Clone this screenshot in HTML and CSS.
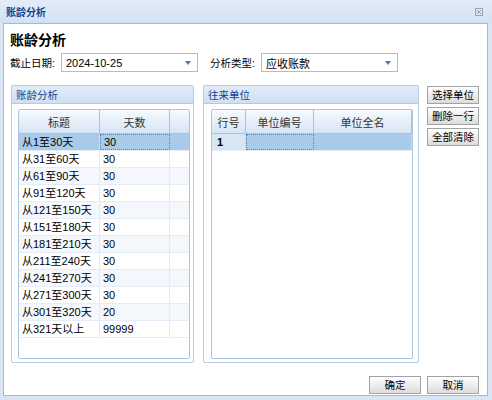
FILE: index.html
```html
<!DOCTYPE html>
<html lang="zh">
<head>
<meta charset="utf-8">
<title>账龄分析</title>
<link rel="stylesheet" href="styles.css">
</head>
<body>
<div class="window">
  <div class="titlebar">
    <span class="title">账龄分析</span>
    <svg class="close" width="8" height="8" viewBox="0 0 8 8"><rect x="0.5" y="0.5" width="7" height="7" fill="none" stroke="#9aa4ae"/><path d="M2 2L6 6M6 2L2 6" stroke="#9aa4ae"/></svg>
  </div>
  <div class="body">
    <h1 class="heading">账龄分析</h1>
    <div class="form-row">
      <label class="lbl">截止日期:</label>
      <div class="combo"><span>2024-10-25</span><i class="arrow"></i></div>
      <label class="lbl lbl2">分析类型:</label>
      <div class="combo"><span>应收账款</span><i class="arrow"></i></div>
    </div>
    <div class="main">
      <div class="panel panel-left">
        <div class="panel-head">账龄分析</div>
        <div class="grid grid-left">
          <div class="ghead">
            <div class="c c1">标题</div><div class="c c2">天数</div><div class="c c3"></div>
          </div>
          <div class="gbody">
            <div class="row sel"><div class="c c1">从1至30天</div><div class="c c2 focus">30</div><div class="c c3"></div></div>
            <div class="row"><div class="c c1">从31至60天</div><div class="c c2">30</div><div class="c c3"></div></div>
            <div class="row alt"><div class="c c1">从61至90天</div><div class="c c2">30</div><div class="c c3"></div></div>
            <div class="row"><div class="c c1">从91至120天</div><div class="c c2">30</div><div class="c c3"></div></div>
            <div class="row alt"><div class="c c1">从121至150天</div><div class="c c2">30</div><div class="c c3"></div></div>
            <div class="row"><div class="c c1">从151至180天</div><div class="c c2">30</div><div class="c c3"></div></div>
            <div class="row alt"><div class="c c1">从181至210天</div><div class="c c2">30</div><div class="c c3"></div></div>
            <div class="row"><div class="c c1">从211至240天</div><div class="c c2">30</div><div class="c c3"></div></div>
            <div class="row alt"><div class="c c1">从241至270天</div><div class="c c2">30</div><div class="c c3"></div></div>
            <div class="row"><div class="c c1">从271至300天</div><div class="c c2">30</div><div class="c c3"></div></div>
            <div class="row alt"><div class="c c1">从301至320天</div><div class="c c2">20</div><div class="c c3"></div></div>
            <div class="row"><div class="c c1">从321天以上</div><div class="c c2">99999</div><div class="c c3"></div></div>
          </div>
        </div>
      </div>
      <div class="panel panel-right">
        <div class="panel-head">往来单位</div>
        <div class="grid grid-right">
          <div class="ghead">
            <div class="c r1">行号</div><div class="c r2">单位编号</div><div class="c r3">单位全名</div>
          </div>
          <div class="gbody">
            <div class="row sel"><div class="c r1 rownum">1</div><div class="c r2 focus"></div><div class="c r3"></div></div>
          </div>
        </div>
      </div>
      <div class="side-buttons">
        <button class="btn">选择单位</button>
        <button class="btn">删除一行</button>
        <button class="btn">全部清除</button>
      </div>
    </div>
    <div class="footer">
      <button class="btn">确定</button>
      <button class="btn">取消</button>
    </div>
  </div>
</div>
</body>
</html>
```
FILE: styles.css
```css
* { box-sizing: border-box; }
html, body { margin: 0; padding: 0; }
body {
  font-family: "Liberation Sans", "Noto Sans CJK SC", sans-serif;
  font-size: 11px;
  color: #000;
  background: #dbe6f4;
}
.window {
  width: 492px;
  height: 400px;
  display: flex;
  flex-direction: column;
  background: #d9e5f4;
}
.titlebar {
  height: 23px;
  flex: none;
  display: flex;
  align-items: center;
  justify-content: space-between;
  padding: 0 9px 0 6px;
  background: linear-gradient(#e3edf9, #d1e1f4);
}
.title {
  color: #15428b;
  font-weight: bold;
  font-size: 10px;
}
.close { margin-top: 1px; }
.body {
  flex: 1;
  margin: 0 4px 4px 3px;
  border: 1px solid #99bbe8;
  background: #fff;
  padding: 0 8px 0 6px;
  display: flex;
  flex-direction: column;
}
.heading {
  margin: 4px 0 0 0;
  font-size: 14px;
  line-height: 24px;
  font-weight: bold;
  color: #000;
}
.form-row {
  display: flex;
  align-items: center;
  margin-top: 1px;
  height: 19px;
}
.lbl {
  width: 51px;
  flex: none;
  white-space: nowrap;
  font-size: 10.5px;
  color: #000;
}
.lbl2 { margin-left: 12px; }
.combo {
  width: 137px;
  flex: none;
  height: 19px;
  border: 1px solid #a5bfdc;
  display: flex;
  align-items: center;
  justify-content: space-between;
  padding: 0 4px 0 4px;
  background: #fff;
}
.arrow {
  width: 0; height: 0;
  border-left: 3px solid transparent;
  border-right: 3px solid transparent;
  border-top: 4px solid #4c7ab3;
  margin-right: 2px;
}
.main {
  display: flex;
  margin-top: 13px;
  height: 278px;
}
.panel {
  border: 1px solid #b5cbe4;
  border-radius: 2px;
  display: flex;
  flex-direction: column;
  background: #fff;
}
.panel-left { width: 183px; margin-left: 1px; }
.panel-right { width: 216px; margin-left: 9px; }
.panel-head {
  height: 18px;
  flex: none;
  line-height: 18px;
  padding-left: 4px;
  font-size: 10.5px;
  color: #15428b;
  background: linear-gradient(#e2ecf8, #cfe0f3);
  border-bottom: 1px solid #b5cbe4;
}
.grid {
  flex: 1;
  border: 1px solid #aac3e0;
  border-radius: 2px;
  display: flex;
  flex-direction: column;
  overflow: hidden;
}
.grid-left { margin: 5px 3px 3px 6px; }
.grid-right { margin: 5px 5px 3px 7px; }
.ghead {
  display: flex;
  height: 24px;
  flex: none;
  background: linear-gradient(#f6fafe, #d5e5f5);
  border-bottom: 1px solid #aac3e0;
}
.ghead .c {
  display: flex;
  align-items: center;
  justify-content: center;
  border-right: 1px solid #aac3e0;
  color: #333;
}
.gbody { flex: 1; }
.row {
  display: flex;
  height: 17px;
  border-bottom: 1px solid #e3ecf7;
  background: #fff;
}
.row.alt { background: #f4f8fd; }
.row.sel { background: #a8cbea; }
.row .c {
  border-right: 1px solid #e1eaf5;
  padding-left: 3px;
  line-height: 16px;
  white-space: nowrap;
}
.row.sel .c { border-right-color: #c9dcef; }
.c.focus { border: 1px dotted #4a86c5 !important; line-height: 14px; }
.c1 { width: 81px; }
.c2 { width: 70px; }
.c3 { flex: 1; border-right: none !important; }
.r1 { width: 34px; }
.r2 { width: 68px; }
.r3 { flex: 1; }
.row .rownum { background: #d8e6f4; font-weight: bold; padding-left: 5px; }
.side-buttons {
  display: flex;
  flex-direction: column;
  gap: 3px;
  margin-left: 8px;
  margin-top: 1px;
}
.btn {
  width: 52px;
  height: 18px;
  padding: 0;
  font-family: "Liberation Sans", "Noto Sans CJK SC", sans-serif;
  font-size: 10.5px;
  color: #000;
  border: 1px solid #a3a3a3;
  background: linear-gradient(#ffffff, #dcdcdc);
  border-radius: 0;
  line-height: 16px;
}
.footer {
  display: flex;
  justify-content: flex-end;
  gap: 6px;
  margin-top: 13px;
  padding-right: 0;
}
```
